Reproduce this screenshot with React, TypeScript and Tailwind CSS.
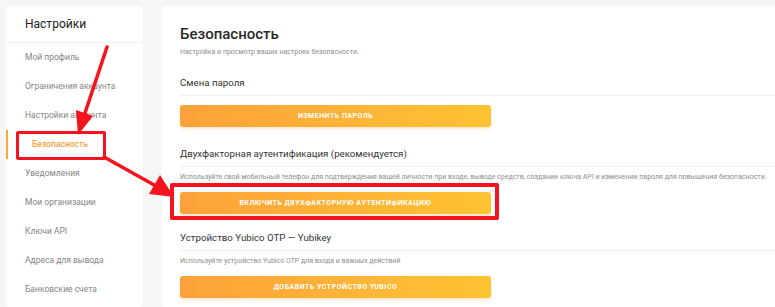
import React from "react";

const menu = [
  "Мой профиль",
  "Ограничения аккаунта",
  "Настройки аккаунта",
  "Безопасность",
  "Уведомления",
  "Мои организации",
  "Ключи API",
  "Адреса для вывода",
  "Банковские счета",
];

function OrangeButton({ label }: { label: string }) {
  return (
    <button className="block w-[311px] h-[22px] rounded-[3px] bg-gradient-to-r from-[#fda13a] to-[#fec332] text-white text-[7px] font-bold tracking-[0.5px] uppercase shadow-[0_2px_3px_rgba(250,160,40,0.25)]">
      {label}
    </button>
  );
}

function SectionHeading({ children }: { children: React.ReactNode }) {
  return (
    <div className="text-[9.7px] leading-[16px] text-[#333] pb-[4px] border-b border-[#f0f0f0]">
      {children}
    </div>
  );
}

export default function App() {
  return (
    <div
      className="relative w-[775px] h-[307px] overflow-hidden bg-[#f6f6f6] flex gap-[19px] pt-[6px] pl-[6px]"
      style={{ fontFamily: 'Roboto, "Noto Sans", sans-serif' }}
    >
      {/* Sidebar */}
      <aside className="w-[137px] shrink-0 bg-white rounded-[4px]">
        <div className="h-[37px] flex items-center pl-[19px] text-[12px] text-[#222] border-b border-[#f2f2f2]">
          Настройки
        </div>
        <ul>
          {menu.map((item) => {
            const active = item === "Безопасность";
            return (
              <li
                key={item}
                className={`h-[29px] flex items-center text-[8.5px] ${
                  active
                    ? "border-l-2 border-[#f8a63d] pl-[24px] text-[#f7a23b] font-medium"
                    : "pl-[19px] text-[#858585]"
                }`}
              >
                {item}
              </li>
            );
          })}
        </ul>
      </aside>

      {/* Main card */}
      <main className="flex-1 bg-white rounded-l-[4px] pl-[18px] pt-[16px]">
        <h1 className="text-[15px] leading-[24px] font-medium text-[#2a2a2a]">Безопасность</h1>
        <p className="text-[7px] leading-[12px] text-[#8c8c8c]">
          Настройка и просмотр ваших настроек безопасности.
        </p>

        <div className="mt-[17px]">
          <SectionHeading>Смена пароля</SectionHeading>
          <div className="mt-[9px]">
            <OrangeButton label="Изменить пароль" />
          </div>
        </div>

        <div className="mt-[19px]">
          <SectionHeading>Двухфакторная аутентификация (рекомендуется)</SectionHeading>
          <p className="mt-[5px] text-[7px] leading-[11px] text-[#8c8c8c] whitespace-nowrap">
            Используйте свой мобильный телефон для подтверждения вашей личности при входе, выводе средств, создании ключа API и изменении пароля для повышения безопасности.
          </p>
          <div className="mt-[9px]">
            <OrangeButton label="Включить двухфакторную аутентификацию" />
          </div>
        </div>

        <div className="mt-[16px]">
          <SectionHeading>Устройство Yubico OTP — Yubikey</SectionHeading>
          <p className="mt-[5px] text-[7px] leading-[11px] text-[#8c8c8c]">
            Используйте устройство Yubico OTP для входа и важных действий
          </p>
          <div className="mt-[9px]">
            <OrangeButton label="Добавить устройство Yubico" />
          </div>
        </div>
      </main>

      {/* Red annotation boxes */}
      <div className="absolute left-[16px] top-[131px] w-[90px] h-[29px] border-[3px] border-[#f5141e] rounded-[2px]" />
      <div className="absolute left-[170px] top-[183px] w-[329px] h-[37px] border-[4px] border-[#f5141e] rounded-[2px]" />

      {/* Red annotation arrows */}
      <svg className="absolute inset-0 pointer-events-none" width="775" height="307">
        <line x1="107" y1="47" x2="85" y2="113" stroke="#f5141e" strokeWidth="3.5" strokeLinecap="round" />
        <polygon points="78,135 93,116 76,110" fill="#f5141e" />
        <line x1="104" y1="157" x2="156" y2="186" stroke="#f5141e" strokeWidth="3.5" strokeLinecap="round" />
        <polygon points="174,197 149,194 160,175" fill="#f5141e" />
      </svg>
    </div>
  );
}
